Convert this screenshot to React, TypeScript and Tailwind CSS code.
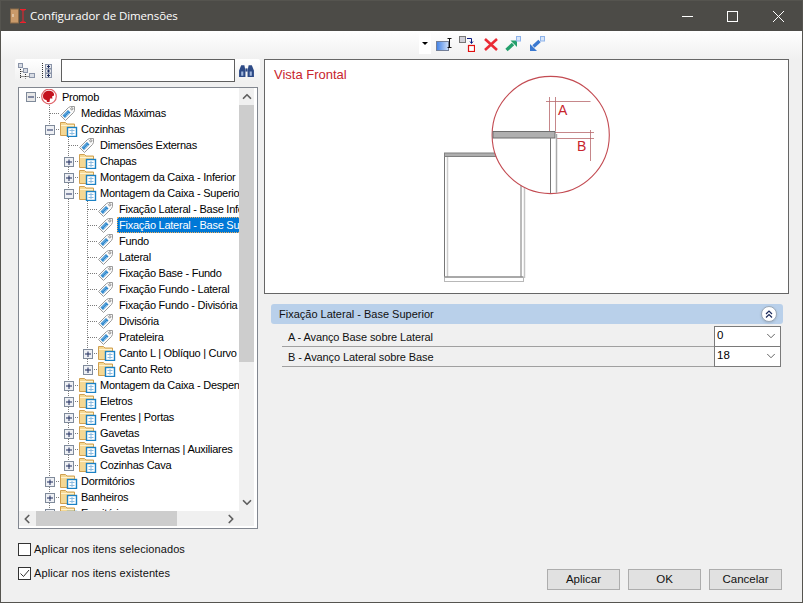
import { ChevronDown, ChevronLeft, ChevronRight, ChevronUp } from "lucide-react";

type Row = {
  depth: number;
  label: string;
  icon: "promob" | "folder" | "tag";
  box?: "plus" | "minus";
  last?: boolean;
  selected?: boolean;
};

const rows: Row[] = [
  { depth: 0, label: "Promob", icon: "promob", box: "minus" },
  { depth: 1, label: "Medidas Máximas", icon: "tag" },
  { depth: 1, label: "Cozinhas", icon: "folder", box: "minus" },
  { depth: 2, label: "Dimensões Externas", icon: "tag" },
  { depth: 2, label: "Chapas", icon: "folder", box: "plus" },
  { depth: 2, label: "Montagem da Caixa - Inferior", icon: "folder", box: "plus" },
  { depth: 2, label: "Montagem da Caixa - Superior", icon: "folder", box: "minus" },
  { depth: 3, label: "Fixação Lateral - Base Inferior", icon: "tag" },
  { depth: 3, label: "Fixação Lateral - Base Superior", icon: "tag", selected: true },
  { depth: 3, label: "Fundo", icon: "tag" },
  { depth: 3, label: "Lateral", icon: "tag" },
  { depth: 3, label: "Fixação Base - Fundo", icon: "tag" },
  { depth: 3, label: "Fixação Fundo - Lateral", icon: "tag" },
  { depth: 3, label: "Fixação Fundo - Divisória", icon: "tag" },
  { depth: 3, label: "Divisória", icon: "tag" },
  { depth: 3, label: "Prateleira", icon: "tag" },
  { depth: 3, label: "Canto L | Oblíquo | Curvo", icon: "folder", box: "plus" },
  { depth: 3, label: "Canto Reto", icon: "folder", box: "plus", last: true },
  { depth: 2, label: "Montagem da Caixa - Despensa", icon: "folder", box: "plus" },
  { depth: 2, label: "Eletros", icon: "folder", box: "plus" },
  { depth: 2, label: "Frentes | Portas", icon: "folder", box: "plus" },
  { depth: 2, label: "Gavetas", icon: "folder", box: "plus" },
  { depth: 2, label: "Gavetas Internas | Auxiliares", icon: "folder", box: "plus" },
  { depth: 2, label: "Cozinhas Cava", icon: "folder", box: "plus", last: true },
  { depth: 1, label: "Dormitórios", icon: "folder", box: "plus" },
  { depth: 1, label: "Banheiros", icon: "folder", box: "plus" },
  { depth: 1, label: "Escritórios", icon: "folder", box: "plus" },
];

function Dots({ d }: { d: string }) {
  return <path d={d} stroke="#7c7c7c" strokeDasharray="1 1" fill="none" />;
}

// one 19px indent column of the tree
function Cell({ row, guide, branch }: { row: Row; guide: boolean; branch: boolean }) {
  return (
    <svg width="19" height="16" className="shrink-0">
      {guide && <Dots d="M9.5 0V16" />}
      {branch && <Dots d={row.last ? "M9.5 0V8" : "M9.5 0V16"} />}
      {branch && <Dots d="M10 8.5H19" />}
      {row.box && branch && (
        <g>
          <rect x="5.5" y="4.5" width="9" height="9" fill="#eef0f4" stroke="#7f8a9a" />
          <path d="M7 9H13" stroke="#1c2b5c" />
          {row.box === "plus" && <path d="M10 6.5V12" stroke="#1c2b5c" />}
        </g>
      )}
    </svg>
  );
}

function PromobBox() {
  return (
    <svg width="19" height="16" className="shrink-0">
      <Dots d="M10 8.5H19" />
      <rect x="5.5" y="3.5" width="9" height="9" fill="#e8e8e8" stroke="#7f8a9a" />
      <path d="M7 8H13" stroke="#1c2b5c" />
    </svg>
  );
}

function TreeIcon({ row }: { row: Row }) {
  if (row.icon === "promob") {
    return (
      <svg width="19" height="16" className="shrink-0">
        <Dots d="M9.5 14V16" />
        <circle cx="9" cy="7.5" r="7.3" fill="#fff" stroke="#e0646a" strokeWidth="1.2" />
        <path d="M3 7.5C3 3.5 6 1.8 9 1.8C12.5 1.8 14.5 4 14 6.5L12 7.5L12.5 9.5L10 9.5L9.5 13H7L6.5 11C4.5 11 3 9.5 3 7.5Z" fill="#c4121e" />
      </svg>
    );
  }
  if (row.icon === "tag") {
    return (
      <svg width="19" height="16" className="shrink-0">
        <path d="M1.5 10.5L9.5 2.5L11.5 1.5H15.5V5.5L14.5 7.5L6.5 15.5Z" fill="#fafafa" stroke="#9a9a9a" />
        <path d="M3.5 10.5L9 5L11.5 7.5L6 13Z" fill="#2b86cc" />
        <path d="M5 10.5L9 6.5M6.5 11.5L10 8" stroke="#a8d0ee" strokeWidth="0.7" />
        <circle cx="12.8" cy="3.8" r="1.1" fill="#fff" stroke="#8f8f8f" />
      </svg>
    );
  }
  const open = row.box === "minus";
  return (
    <svg width="19" height="16" className="shrink-0">
      {open && <Dots d="M9.5 15V16" />}
      <path d="M1.5 14.5V1.5H6.5L8 3H15.5V14.5Z" fill="#f5d894" stroke="#d0a050" />
      <path d="M2 4.5H15" stroke="#fff3d0" />
      <rect x="8.5" y="6.5" width="9" height="9" fill="#fff" stroke="#1b81c4" strokeWidth="1.4" />
      <path d="M10.5 9.5H15.5M10.5 12.5H15.5M13 8V14" stroke="#8bbbe0" />
    </svg>
  );
}

function TreeRow({ row }: { row: Row }) {
  const cols = [];
  for (let i = 0; i < row.depth; i++) {
    cols.push(<Cell key={i} row={row} guide={i > 0} branch={false} />);
  }
  return (
    <div className="flex h-4 shrink-0 items-center whitespace-nowrap tracking-[-0.25px]">
      {cols}
      {row.depth === 0 ? <PromobBox /> : <Cell row={row} guide={false} branch={true} />}
      <TreeIcon row={row} />
      <span
        className={
          row.selected
            ? "ml-[1px] h-4 border border-dotted border-[#f0b060] bg-[#0078d7] pl-[1px] pr-[2px] text-white leading-[14px]"
            : "ml-[1px] pl-[2px] pr-[2px] text-black leading-4"
        }
      >
        {row.label}
      </span>
    </div>
  );
}

function Tree() {
  return (
    <div className="ml-[17px] mt-[5px] flex h-[442px] w-[240px] flex-col border border-[#828790] bg-white">
      <div className="flex min-h-0 flex-1">
        <div className="flex w-[220px] flex-col overflow-hidden pl-[2px] pt-[1px]">
          {rows.map((row) => (
            <TreeRow key={row.label} row={row} />
          ))}
        </div>
        <div className="flex w-[15px] flex-col items-center bg-[#f0f0f0]">
          <ChevronUp size={14} strokeWidth={3} className="mt-[1px] h-[15px] shrink-0 text-[#606060]" />
          <div className="mt-[1px] h-[257px] w-full bg-[#cdcdcd]" />
          <ChevronDown size={14} strokeWidth={3} className="mb-[1px] mt-auto h-[15px] shrink-0 text-[#606060]" />
        </div>
      </div>
      <div className="mb-[2px] flex h-[15px] w-[235px] items-center bg-[#f0f0f0]">
        <ChevronLeft size={14} strokeWidth={3} className="ml-[1px] shrink-0 text-[#606060]" />
        <div className="ml-[2px] h-full w-[141px] bg-[#cdcdcd]" />
        <ChevronRight size={14} strokeWidth={3} className="ml-auto mr-[16px] shrink-0 text-[#606060]" />
      </div>
    </div>
  );
}

function TreeTools() {
  return (
    <div className="ml-[14px] flex h-[23px] w-[245px] items-center rounded-[2px] bg-gradient-to-b from-white to-[#f0f0f0]">
      <svg width="18" height="16" className="ml-[3px] shrink-0">
        <path d="M2.5 4V15.5M7.5 9V15.5M2.5 8.5H6M2.5 13.5H11" stroke="#333" strokeDasharray="1 1" />
        <rect x="0.5" y="0.5" width="4" height="4" fill="#d8dce4" stroke="#8a94a8" />
        <rect x="5.5" y="5.5" width="4" height="4" fill="#d8dce4" stroke="#8a94a8" />
        <rect x="11.5" y="10.5" width="5" height="4" fill="#d8dce4" stroke="#8a94a8" />
      </svg>
      <svg width="16" height="16" className="ml-[5px] shrink-0">
        <path d="M1.5 0V16" stroke="#333" strokeDasharray="1 1" />
        <rect x="4.5" y="1.5" width="6" height="4" fill="#e4e6ea" stroke="#8a94a8" />
        <rect x="4.5" y="6" width="6" height="4" fill="#e4e6ea" stroke="#8a94a8" />
        <rect x="4.5" y="10.5" width="6" height="4" fill="#e4e6ea" stroke="#8a94a8" />
        <path d="M6 3.5H9M7.5 2V5M6 8H9M7.5 6.5V9.5M6 12.5H9M7.5 11V14" stroke="#1c2b5c" />
      </svg>
      <input
        readOnly
        className="ml-[4px] h-[23px] w-[174px] border border-[#5f5f5f] bg-white outline-none"
      />
      <svg width="17" height="15" viewBox="0 0 16 14" className="ml-[3px] shrink-0">
        <path d="M1 13V7L3 2H6L7 7V13ZM9 13V7L10 2H13L15 7V13Z" fill="#2d4a86" />
        <path d="M7 5H9V8H7Z" fill="#2d4a86" />
        <path d="M3 8H5V12H3ZM11 8H13V12H11Z" fill="#9fb6dc" />
      </svg>
    </div>
  );
}

function MainTools() {
  return (
    <div className="flex h-[28px] items-center bg-gradient-to-b from-white to-[#f0f0f0] pb-[3px] pl-[418px]">
      <div className="flex h-[21px] w-3 items-center justify-center bg-white">
        <div className="h-0 w-0 border-x-[3px] border-t-[3px] border-x-transparent border-t-black" />
      </div>
      <svg width="16" height="16" className="ml-[5px] shrink-0">
        <defs>
          <linearGradient id="boxFill" x1="0" x2="1" y1="0" y2="0">
            <stop offset="0" stopColor="#3f80e6" />
            <stop offset="1" stopColor="#cfe0fa" />
          </linearGradient>
        </defs>
        <rect x="0.5" y="5.5" width="12" height="9" fill="url(#boxFill)" stroke="#737f98" />
        <path d="M11.5 2.5H15.5M13.5 2.5V11.5M11.5 11.5H15.5" stroke="#111" />
      </svg>
      <svg width="16" height="16" className="ml-[7px] shrink-0">
        <rect x="0.5" y="0.5" width="6" height="6" fill="#d0d0d8" stroke="#777" />
        <rect x="9.5" y="9.5" width="6" height="6" fill="#fff" stroke="#e01010" strokeWidth="1.2" />
        <path d="M8 2.5H12.5V7M11 5.5L12.5 7.5L14 5.5" fill="none" stroke="#0a1a80" />
      </svg>
      <svg width="16" height="16" className="ml-[8px] shrink-0">
        <path d="M2 3L14 14M14 3L2 14" stroke="#ea2a34" strokeWidth="2.6" />
      </svg>
      <svg width="16" height="16" className="ml-[6px] shrink-0">
        <path d="M1.5 14L8 8" stroke="#24a06c" strokeWidth="3.4" />
        <path d="M5.5 4.5H12V11Z" fill="#24a06c" />
        <rect x="11.5" y="0.5" width="4" height="4.5" fill="#d8e6fa" stroke="#8fb4ea" />
      </svg>
      <svg width="16" height="16" className="ml-[8px] shrink-0">
        <path d="M10.5 5L4.5 10.5" stroke="#3a78d0" strokeWidth="3.4" />
        <path d="M1 15V8L8 15Z" fill="#3a78d0" />
        <rect x="11.5" y="0.5" width="4" height="4.5" fill="#d8e6fa" stroke="#8fb4ea" />
      </svg>
    </div>
  );
}

function Drawing() {
  const dim = "#b8686c";
  return (
    <svg width="190" height="233" className="shrink-0">
      <path d="M14.5 96V218" stroke="#777" />
      <path d="M17.5 96V218" stroke="#ccc" strokeWidth="1.5" />
      <path d="M91 96V218" stroke="#777" />
      <path d="M94.5 96V218" stroke="#c4c4c4" strokeWidth="1.5" />
      <rect x="14.5" y="93" width="60" height="3.5" fill="#aeaeae" stroke="#808080" />
      <rect x="14.5" y="217" width="79" height="4.5" fill="#fff" stroke="#b8b8b8" />
      <path d="M14.5 217H93" stroke="#777" />
      <circle cx="120.7" cy="75" r="58.6" fill="#fff" stroke="#c34b52" strokeWidth="1.1" />
      <path d="M119.5 37V71M125.5 37V71M116 41.5H160.5M125 72.5H164M127 78.5H164M160.5 70V101" stroke={dim} strokeWidth="0.8" />
      <rect x="63" y="71.5" width="62" height="6.5" fill="#b0b0b0" stroke="#6e6e6e" />
      <path d="M120.5 78V133" stroke="#777" />
      <path d="M126.5 74V133" stroke="#aaa" strokeWidth="1.5" />
      <text x="128" y="55" fontSize="14" fill="#c8242c">A</text>
      <text x="147" y="91" fontSize="14" fill="#c8242c">B</text>
    </svg>
  );
}

function Combo({ value }: { value: string }) {
  return (
    <div className="flex h-[21px] w-[67px] shrink-0 items-center border border-[#7a7a7a] bg-white pl-[2px] text-[11.5px] text-black">
      <span className="flex-1">{value}</span>
      <ChevronDown size={14} strokeWidth={1.4} className="mr-[2px] text-[#444]" />
    </div>
  );
}

function Param({ label, value }: { label: string; value: string }) {
  return (
    <div className="-mb-[1px] ml-[11px] mr-[2px] flex h-[21px] items-center border-b border-[#a0a0a0]">
      <span className="flex-1 pl-[6px] pt-[2px] tracking-[-0.1px] text-[#111]">{label}</span>
      <Combo value={value} />
    </div>
  );
}

function Button({ label }: { label: string }) {
  return (
    <button className="h-[21px] w-[73px] border border-[#adadad] bg-[#e1e1e1] text-[11.5px] text-[#111]">{label}</button>
  );
}

function Check({ label, checked }: { label: string; checked?: boolean }) {
  return (
    <div className="ml-[17px] flex h-[14px] items-center gap-[3px]">
      <div className="h-[13px] w-[13px] shrink-0 border border-[#333] bg-white">
        {checked && (
          <svg width="11" height="11">
            <path d="M1.5 5.5L4.5 8.5L10 2" fill="none" stroke="#333" />
          </svg>
        )}
      </div>
      <span className="tracking-[0.1px] text-[#111]">{label}</span>
    </div>
  );
}

export default function App() {
  return (
    <div className="flex h-[603px] w-[803px] flex-col border border-[#55544f] bg-[#f0f0f0] font-['Liberation_Sans',sans-serif] text-[11px]">
      <div className="flex h-[30px] shrink-0 items-center bg-[#4c4b47] pl-[9px] text-white">
        <svg width="18" height="16" className="shrink-0">
          <rect x="0.5" y="1" width="8" height="14" fill="#c99a6a" stroke="#8a6a48" />
          <path d="M3 6V9" stroke="#f4e8d8" />
          <path d="M10 1.5H16M13 1.5V14.5M10 14.5H16M11.5 3L13 1.5L14.5 3M11.5 13L13 14.5L14.5 13" fill="none" stroke="#f0202c" />
        </svg>
        <span className="ml-[2px] font-['Open_Sans',sans-serif] text-[11.5px] tracking-[-0.1px] text-white">Configurador de Dimensões</span>
        <div className="ml-auto flex items-center">
          <svg width="11" height="11" className="mr-[34px]">
            <path d="M0 5.5H11" stroke="#fff" />
          </svg>
          <svg width="11" height="11" className="mr-[34px]">
            <rect x="0.5" y="0.5" width="10" height="10" fill="none" stroke="#fff" />
          </svg>
          <svg width="13" height="13" className="mr-[17px]">
            <path d="M1 1L12 12M12 1L1 12" stroke="#fff" />
          </svg>
        </div>
      </div>
      <MainTools />
      <div className="flex min-h-0 flex-1">
        <div className="flex w-[263px] shrink-0 flex-col">
          <TreeTools />
          <Tree />
          <div className="mt-[13px] flex flex-col gap-[10px]">
            <Check label="Aplicar nos itens selecionados" />
            <Check label="Aplicar nos itens existentes" checked />
          </div>
        </div>
        <div className="flex min-w-0 flex-1 flex-col">
          <div className="flex h-[235px] w-[525px] shrink-0 border border-[#666] bg-white">
            <div className="w-[165px] shrink-0 pl-[9px] pt-[5px] text-[13px] text-[#c8242c]">Vista Frontal</div>
            <Drawing />
          </div>
          <div className="ml-[7px] mt-[10px] w-[512px]">
            <div className="flex h-[20px] items-center justify-between rounded-[3px] bg-[#b9d0ea] pl-2 pr-[6px] text-[#111]">
              <span>Fixação Lateral - Base Superior</span>
              <div className="flex h-4 w-4 items-center justify-center rounded-full border border-[#9aa8b8] bg-white shadow">
                <svg width="10" height="10">
                  <path d="M2 5L5 2L8 5M2 8.5L5 5.5L8 8.5" fill="none" stroke="#1c2b5c" strokeWidth="1.2" />
                </svg>
              </div>
            </div>
            <div className="mt-[2px]">
              <Param label="A - Avanço Base sobre Lateral" value="0" />
              <Param label="B - Avanço Lateral sobre Base" value="18" />
            </div>
          </div>
          <div className="mb-[12px] mr-[20px] mt-auto flex justify-end gap-2">
            <Button label="Aplicar" />
            <Button label="OK" />
            <Button label="Cancelar" />
          </div>
        </div>
      </div>
    </div>
  );
}
